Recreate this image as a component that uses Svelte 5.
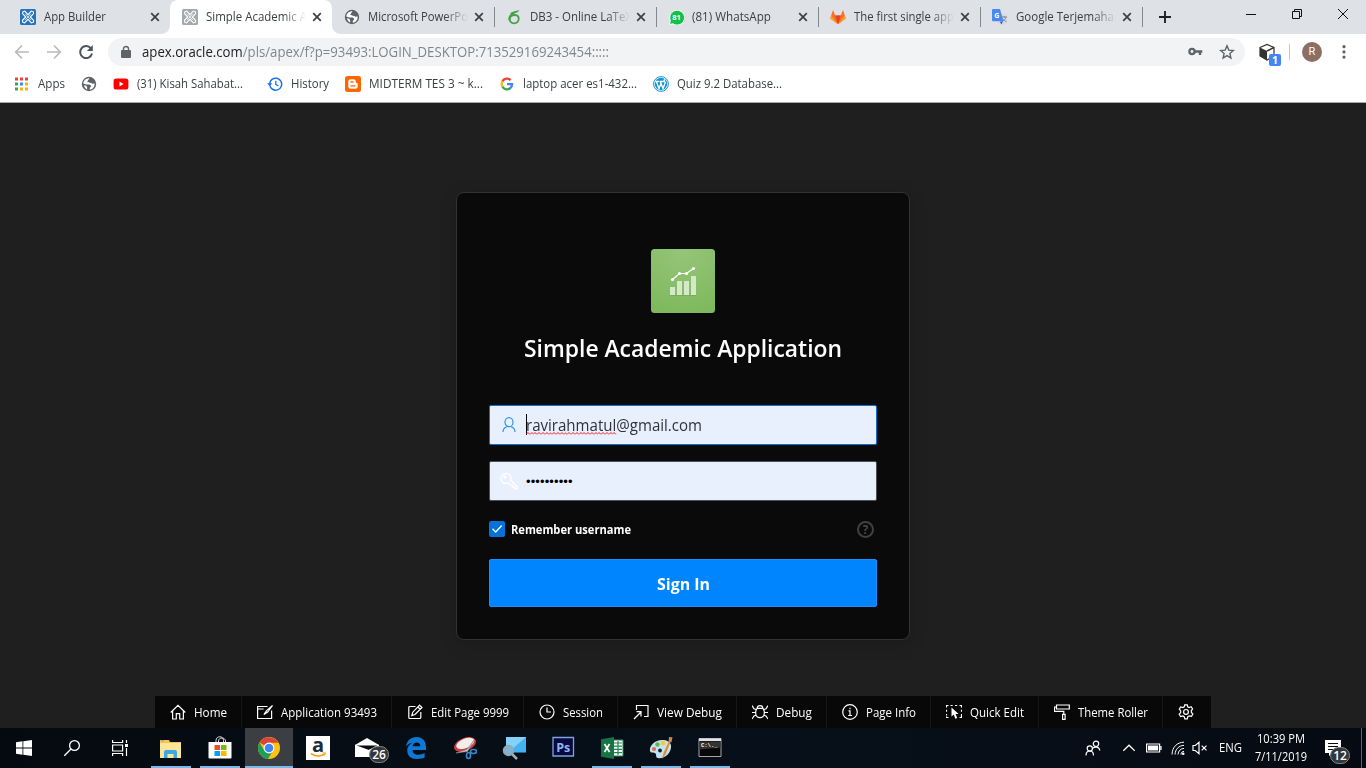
<script>
  // Condenses or widens a label so it fills exactly `width` pixels.
  function fit(node, width) {
    const natural = node.getBoundingClientRect().width;
    if (!natural) return;
    node.style.transform = `scaleX(${width / natural})`;
    node.style.marginRight = width - natural + 'px';
  }

  const apex = (c) => `<rect width="16" height="16" rx="1.5" fill="${c}"/><g fill="none" stroke="#fff" stroke-width="1.1"><path d="M3 2.7l1.8-.6 3.2 3.5 3.2-3.5 2.2.7.1 1.8L10.3 8l3.3 3.4-.2 1.8-2 .7L8 10.4l-3.4 3.4-1.9-.6-.2-1.9L5.8 8 2.5 4.6z"/><path d="M5.200 4.800l5.800 6.300M10.800 4.800l-5.700 6.400" stroke-width=".8"/></g>`;
  const globe = `<circle cx="8" cy="8" r="7.2" fill="#5f6368"/><path d="M8.4 2.2L6.8 5l1 1.2 2.2.2 1.2 1.4 2.4-.2c.4 3.2-1.9 5.9-4.800 6.200V12l1.600-2-1.800-1.600H5.200L2.300 7.500C2.500 4.400 5 2.200 8.400 2.200z" fill="#fff"/><path d="M3 9.300l2.300.4.8 1.500v2.200C4.400 12.800 3.200 11 3 9.300z" fill="#fff"/><path d="M6 5.400L9 3l3.500 2.300L10 7z" fill="#5f6368"/>`;

  const tabs = [
    { title: 'App Builder', w: 62, icon: apex('#2574bb') },
    { title: 'Simple Academic A', w: 101, icon: apex('#a4a9ad'), active: true, fade: true },
    { title: 'Microsoft PowerPo', w: 100, icon: globe, fade: true },
    { title: 'DB3 - Online LaTeX', w: 102, fade: true, sep: true, icon: `<path d="M3 11.200c0-3.500 2.200-6 5.400-6.500M9.200 6c2.300 0 3.700 1.700 3.500 4-.2 2.500-2.200 4.300-4.700 4.300-2.600 0-4.300-1.700-4.200-4.300.2-2.400 2.400-4.100 5.400-4z" fill="none" stroke="#46a247" stroke-width="1.800"/><path d="M4 4.600C6 2.500 9 2 13.500 1.200 12 3.600 9 4 6.200 5.400z" fill="#46a247"/>` },
    { title: '(81) WhatsApp', w: 79, sep: true, icon: `<path d="M1.500 15.500l.8-4A7.400 7.400 0 1 1 5 14.800z" fill="#12c146" stroke="#fff" stroke-width="1"/><text x="8.500" y="10.700" text-anchor="middle" font-family="Open Sans, sans-serif" font-weight="700" font-size="7.500" fill="#fff">81</text>` },
    { title: 'The first single app', w: 100, fade: true, sep: true, icon: `<path d="M8 15.300L.2 9.500 3 1l2.200 5.400h5.600L13 1l2.800 8.500z" fill="#fc6d26"/><path d="M8 15.300L5.200 6.400h5.600z" fill="#e24329"/><path d="M8 15.300L.2 9.500l1-3zM8 15.300l7.800-5.800-1-3z" fill="#fca326"/>` },
    { title: 'Google Terjemahan', w: 105, fade: true, sep: true, icon: `<rect x="6" y="5" width="9.500" height="10.500" rx="1" fill="#d8dbe0"/><path d="M9.500 8h5.500M12.200 7v1.200M14 8.200c-.5 2-2 3.300-3.500 4M10.700 9.500c.7 1.300 2 2.400 3.800 3.200" fill="none" stroke="#73829a" stroke-width=".9"/><path d="M8 12.500h3l-1.700 3z" fill="#2752c4"/><path d="M1.200 0H8l3.400 12.300H1.200A1.200 1.200 0 0 1 0 11.100V1.200A1.200 1.200 0 0 1 1.200 0z" fill="#4a88f2"/><text x="4.800" y="8.800" text-anchor="middle" font-family="Open Sans, sans-serif" font-weight="700" font-size="7" fill="#fff">G</text>` }
  ];

  const bookmarks = [
    { label: 'Apps', w: 27, x: 14, gap: 8, icon: `<g fill="#ea4335"><path d="M1 1.500h3v3H1zM6 1.500h3v3H6z"/><path d="M11 1.500h3v3h-3z"/></g><path d="M1 6.500h3v3H1z" fill="#34a853"/><path d="M6 6.500h3v3H6z" fill="#4285f4"/><path d="M11 6.500h3v3h-3zM6 11.500h3v3H6zM11 11.500h3v3h-3z" fill="#fbaf04"/><path d="M1 11.500h3v3H1z" fill="#34a853"/>` },
    { label: '', w: 0, x: 16, gap: 0, icon: globe },
    { label: '(31) Kisah Sahabat...', w: 106, x: 16, gap: 8, icon: `<rect x=".6" y="2.500" width="14.800" height="11" rx="2.600" fill="#f00"/><path d="M6.500 5.600v4.800L10.600 8z" fill="#fff"/>` },
    { label: 'History', w: 38, x: 24, gap: 8, icon: `<path d="M2.700 9A6 6 0 1 0 5 3.400 6 6 0 0 0 2.700 8" fill="none" stroke="#1a73e8" stroke-width="1.500"/><path d="M0 7.200h5.400L2.700 10z" fill="#1a73e8"/><path d="M8.800 4.800v3.600l2.600 1.600" fill="none" stroke="#1a73e8" stroke-width="1.300"/>` },
    { label: 'MIDTERM TES 3 ~ k...', w: 114, x: 16, gap: 8, icon: `<rect width="16" height="16" rx="2.500" fill="#f60"/><path d="M3.300 5.800a2.500 2.500 0 0 1 2.500-2.500h2.500a2.500 2.500 0 0 1 2.500 2.500c0 .8.300 1.200 1 1.200.6 0 .9.300.9.900v2.300a2.500 2.500 0 0 1-2.500 2.500H5.800a2.500 2.500 0 0 1-2.500-2.500z" fill="#fff"/><path d="M6 6h2M6 9.900h4" stroke="#f60" stroke-width="1.300" stroke-linecap="round"/>` },
    { label: 'laptop acer es1-432...', w: 114, x: 16, gap: 8, icon: `<g fill="none" stroke-width="2.300"><path d="M3.400 5.400A5.100 5.100 0 0 1 11.600 4.200" stroke="#ea4335"/><path d="M3.400 10.600a5.100 5.100 0 0 1 0-5.200" stroke="#fbbc05"/><path d="M11.500 11.900a5.100 5.100 0 0 1-8.100-1.300" stroke="#34a853"/><path d="M8 8.200h5.100a5.100 5.100 0 0 1-1.700 3.800" stroke="#4285f4"/></g>` },
    { label: 'Quiz 9.2 Database...', w: 105, x: 16, gap: 8, icon: `<circle cx="8" cy="8" r="7.400" fill="#fff" stroke="#1696d2" stroke-width="1"/><circle cx="8" cy="8" r="6.200" fill="#1696d2"/><path d="M2.200 5.500h3.600M6.500 5.500h4M3.500 5.700L6 12.600l2-5.300-.6-1.700M8 7.300l2 5.300 2.300-6.100c-1.700-1-1.500-2.700-.2-2.900" stroke="#fff" stroke-width="1.300" fill="none"/>` }
  ];

  const tools = [
    { label: 'Home', w: 33, icon: `<path d="M.7 8.500L8 1.300l7.300 7.200M2.600 7v8h3.700V9.600h3.400V15h3.700V7"/>` },
    { label: 'Application 93493', w: 96, icon: `<path d="M10.500 2.500H.6v12h14v-8M15.500 1.500L9.600 6.600l-2.700 4 3.800-2.500zM.6 5h6"/>` },
    { label: 'Edit Page 9999', w: 78, icon: `<path d="M8.500 2.500H2.800a1 1 0 0 0-1 1v10a1 1 0 0 0 1 1h10a1 1 0 0 0 1-1V8M12.600 1.200l2.400 2.300-7 7-3.200 1 1-3.300zM10.900 3l2.300 2.300"/>` },
    { label: 'Session', w: 40, icon: `<circle cx="8" cy="8" r="7"/><path d="M8 3.500V8h4"/>` },
    { label: 'View Debug', w: 65, icon: `<path d="M3.500 6V1.500H15v11h-4M1 15l7-7M3.500 7.700H8v4.800"/>` },
    { label: 'Debug', w: 36, icon: `<path d="M5 4.300h6l1.300 3v2.300c0 2.300-1.900 4-4.300 4s-4.300-1.700-4.300-4V7.300zM5.200 4.300C5.200 2.500 6.300 1.700 8 1.700s2.800.8 2.800 2.600M0 1.500l2 3.300 2 .7M16 1.500l-2 3.300-2 .7M0 8.500h3.700M12.300 8.500H16M0 15l2-3 2-.8M16 15l-2-3-2-.8"/>` },
    { label: 'Page Info', w: 50, icon: `<circle cx="8" cy="8" r="7.300"/><path d="M6.500 6.800H8v4.600M6.200 11.500h3.800M8 3.700v1.500"/>` },
    { label: 'Quick Edit', w: 54, icon: `<path d="M.5 3.500v-2h2M4.500 1.500h2.200M9 1.500h2.200M13.500 1.500h2v2M.5 5.700v2M.5 10v1.500M.5 12.500v1h2M15.500 5.700v2M15.500 10v3.500h-2"/><path d="M5.500 3.500v9l2.200-2 1.600 4.200 1.900-.8-1.600-3.900h3z" fill="#fff" stroke="none"/>` },
    { label: 'Theme Roller', w: 70, icon: `<path d="M2.500 1h12.800v4H2.500zM2.500 3H.5v4.300h9.300v3M8.600 10.300h2.500v5H8.600z"/>` },
    { label: '', w: 0, icon: `<path d="M6.700.8h2.600l.4 2.100 1.400.7 2-.9 1.500 2.200-1.300 1.800.1 1.700 1.500 1.700-1.400 2.300-2.100-.6-1.600.9-.5 2.100H6.800l-.6-2.100-1.500-.8-2.100.6-1.400-2.300 1.500-1.600V6.900L1.300 5.200l1.300-2.300 2.200.7 1.400-.8z"/><circle cx="8" cy="7.900" r="2.400"/>` }
  ];

  const apps = [
    { name: 'explorer', run: true, icon: `<path d="M1 4h9l1 2h11v16H1z" fill="#f5c64f"/><path d="M1 7h21v15H1z" fill="#fde69a"/><path d="M2 4.700h3" stroke="#4cb8e8"/><path d="M5 22v-6a2 2 0 0 1 2-2h9a2 2 0 0 1 2 2v6h-3.500v-4h-6v4z" fill="#3ca9e2"/>` },
    { name: 'store', run: true, icon: `<path d="M8 7V4.500C8 -.5 15.500 -.5 15.500 4.500V7M10.500 7V5c0-4 7-4 7 0v2" fill="none" stroke="#ddd"/><path d="M.5 6h23v15.500a1 1 0 0 1-1 1h-21a1 1 0 0 1-1-1z" fill="#fff"/><path d="M6.500 9H12v5H6.500z" fill="#f25022"/><path d="M13 9h5.500v5H13z" fill="#7fba00"/><path d="M6.500 15H12v5H6.500z" fill="#00a4ef"/><path d="M13 15h5.500v5H13z" fill="#ffb900"/>` },
    { name: 'chrome', run: true, active: true, icon: `<circle cx="12" cy="12" r="11" fill="#fbc116"/><path d="M12 12L2.500 6.500A11 11 0 0 1 21.500 6.800H12z" fill="#db4437"/><path d="M2.500 6.500A11 11 0 0 0 11 23l5-8.500-4 2.500-5-3z" fill="#1e9e58"/><circle cx="12" cy="12" r="5.400" fill="#fff"/><circle cx="12" cy="12" r="4.300" fill="#4285f4"/>` },
    { name: 'amazon', icon: `<path d="M0 0h24v24H0z" fill="#fff"/><text x="12" y="16" text-anchor="middle" font-family="Open Sans, sans-serif" font-size="20" font-weight="700" fill="#202b3a">a</text><path d="M5 17.700c4.500 3 9.500 2.900 13.500.5" fill="none" stroke="#f90" stroke-width="1.500"/><path d="M16.500 17l2.900-.2-.8 2.700" fill="none" stroke="#f90"/>` },
    { name: 'mail', badge: '26', icon: `<path d="M0 9L12 2l12 7v12H0z" fill="#fff"/><path d="M1.500 9.500h21L14 14z" fill="#070d14"/><path d="M0 9l11 7 13-7" fill="none" stroke="#fff" stroke-width="1"/>` },
    { name: 'edge', icon: `<path d="M2 10.500C3 4.500 7 1 12.500 1 18.500 1 22 5.300 22 11v3H8.500c.2 3.300 2.500 4.700 5.700 4.700 2.500 0 4.500-.6 6.400-1.700v4.600C18.600 22.600 16 23 13 23 7 23 3.200 19.700 3.200 14.500c0-3.500 1.900-6.200 5-7.800C5.500 7 3.400 8.500 2 10.500zM8.600 10.300h7.800c-.1-2.600-1.400-3.900-3.700-3.900-2.200 0-3.700 1.500-4.100 3.900z" fill="#0f78d4"/>` },
    { name: 'snip', icon: `<ellipse cx="12" cy="8.500" rx="11.500" ry="6.500" transform="rotate(-22 12 8.500)" fill="#d83a3c"/><ellipse cx="12.500" cy="7.500" rx="9.500" ry="4.800" transform="rotate(-22 12 8)" fill="#f3eeee"/><path d="M3 17l11-3.500L21 4l-6.500 11.500z" fill="#c9cdd2" stroke="#808991" stroke-width=".6"/><g fill="none" stroke="#3b85c4" stroke-width="1.700"><ellipse cx="15.500" cy="19.500" rx="2" ry="3"/><ellipse cx="20.500" cy="15.500" rx="3" ry="2"/></g>` },
    { name: 'magnifier', icon: `<path d="M4 1h20v15H4z" fill="#43b2f2"/><path d="M4 1h20L8 15l-4-3z" fill="#84d1fa"/><path d="M4 16h20v1H4z" fill="#29648c"/><path d="M10 18l5 5" stroke="#a6afb7" stroke-width="2.500"/><circle cx="6.500" cy="14.500" r="5" fill="#82b4d1" stroke="#95a7b2" stroke-width="1.500"/>` },
    { name: 'photoshop', icon: `<path d="M2 1.500h20.500v18.500H2z" fill="#09093f" stroke="#7fa3dc" stroke-width="1.300"/><text x="12.200" y="15.700" text-anchor="middle" font-family="Open Sans, sans-serif" font-size="12.500" font-weight="700" fill="#91b6ef">Ps</text>` },
    { name: 'excel', run: true, icon: `<path d="M13 4h10v16H13z" fill="#fff" stroke="#208552"/><path d="M14 7h8M14 10.200h8M14 13.400h8M14 16.600h8M18 5v14" stroke="#208552" stroke-width="1.200"/><path d="M1 3.300L14 1v22L1 20.700z" fill="#177443"/><path d="M4.500 8l5 8M9.500 8l-5 8" stroke="#fff" stroke-width="1.700"/>` },
    { name: 'paint', run: true, icon: `<path d="M1 15c-1-6 6-12 14-11 7 1 8.500 6 6 11-2 5-8 8-12 7-3-.6-1-3-2.500-4.500S1.500 17.600 1 15z" fill="#c3e3f3"/><circle cx="5" cy="13" r="2.100" fill="#e36c4b"/><circle cx="8.500" cy="8.500" r="2.200" fill="#63b450"/><circle cx="14" cy="7.200" r="2.400" fill="#f6c834"/><circle cx="11" cy="14.500" r="1.900" fill="#12202c"/><path d="M13 23l1.500-6L20 5l1.500 1-5 12.500z" fill="#e38b2c"/><path d="M19.500 6l.5-5 3.500.3-1 5z" fill="#bd8b5d"/>` },
    { name: 'terminal', run: true, icon: `<path d="M1 2.500h22v18H1z" fill="#070707" stroke="#a4a6aa" stroke-width="1"/><path d="M1 2.500h22V5H1z" fill="#e1e2e4"/><path d="M1.500 5.500h21v6l-21 2z" fill="#333"/><text x="3" y="11" font-family="Liberation Mono, monospace" font-size="5.500" font-weight="700" fill="#fff">C:\\._</text>` }
  ];
</script>

{#snippet glyph(body, size = 16)}
  <svg width={size} height={size} viewBox="0 0 {size} {size}" aria-hidden="true">{@html body}</svg>
{/snippet}

<div class="screen">
  <header class="tabstrip">
    {#each tabs as t}
      <div class="tab" class:active={t.active} class:sep={t.sep}>
        {@render glyph(t.icon)}
        <span class="title" class:fade={t.fade}><span class="fit" use:fit={t.w}>{t.title}</span></span>
        <svg class="close" width="10" height="10" viewBox="0 0 10 10"><path d="M1.200 1.200l7.600 7.600M8.800 1.200L1.200 8.800" stroke="#3c4043" stroke-width="1.700" /></svg>
      </div>
    {/each}
    <svg class="plus" width="14" height="14" viewBox="0 0 14 14"><path d="M7 1v12M1 7h12" stroke="#202124" stroke-width="1.900" /></svg>
    <div class="window">
      <svg width="12" height="12" viewBox="0 0 12 12"><path d="M1 6.500h10" /></svg>
      <svg width="12" height="12" viewBox="0 0 12 12"><path d="M1.500 3.500h7v7h-7zM3.500 3.500v-2h7v7h-2" /></svg>
      <svg width="12" height="12" viewBox="0 0 12 12"><path d="M1 1l10 10M11 1L1 11" /></svg>
    </div>
  </header>

  <nav class="toolbar">
    <div class="navs">
      <svg width="16" height="16" viewBox="0 0 16 16"><path d="M15 8H2M8 1.500L1.700 8 8 14.500" stroke="#b9bbbe" stroke-width="1.700" fill="none" /></svg>
      <svg width="16" height="16" viewBox="0 0 16 16"><path d="M1 8h13M8 1.500L14.300 8 8 14.500" stroke="#b9bbbe" stroke-width="1.700" fill="none" /></svg>
      <svg width="16" height="16" viewBox="0 0 16 16"><path d="M13.200 4.800A6 6 0 1 0 14 9.500" stroke="#505458" stroke-width="2" fill="none" /><path d="M14.800 1v6H8.800z" fill="#505458" /></svg>
    </div>
    <div class="omnibox">
      <svg width="10" height="14" viewBox="0 0 10 14"><path d="M1 5h8a1 1 0 0 1 1 1v6a1 1 0 0 1-1 1H1a1 1 0 0 1-1-1V6a1 1 0 0 1 1-1z" fill="#5f6368" /><path d="M2.500 6V3.700C2.500.7 7.500.7 7.500 3.700V6" fill="none" stroke="#5f6368" stroke-width="1.400" /></svg>
      <span class="url fit" use:fit={467}><b>apex.oracle.com</b>/pls/apex/f?p=93493:LOGIN_DESKTOP:713529169243454:::::</span>
      <svg class="key" width="16" height="10" viewBox="0 0 16 10"><circle cx="5" cy="4.500" r="2.600" fill="none" stroke="#5f6368" stroke-width="2.300" /><path d="M8 4.500h7.300M13 4.500V8" stroke="#5f6368" stroke-width="2.400" /></svg>
      <svg class="star" width="16" height="16" viewBox="0 0 16 16"><path d="M8 1.800l1.800 4.300 4.600.4-3.500 3 1 4.500L8 11.600 4.100 14l1-4.500-3.500-3 4.600-.4z" fill="none" stroke="#5f6368" stroke-width="1.400" /></svg>
    </div>
    <div class="extension">
      <svg width="18" height="18" viewBox="0 0 18 18"><path d="M2 4.500l7-3 7 3v8.500l-7 4-7-4z" fill="#fff" stroke="#303236" stroke-width="1.200" /><path d="M2 4.500l7 3.500v9l-7-4z" fill="#303236" /><path d="M9 8l7-3.500" stroke="#303236" stroke-width="1.500" /></svg>
      <span class="count">1</span>
    </div>
    <i class="rule"></i>
    <span class="avatar">R</span>
    <svg class="dots" width="4" height="16" viewBox="0 0 4 16" fill="#5f6368"><circle cx="2" cy="2.700" r="1.600" /><circle cx="2" cy="7.900" r="1.600" /><circle cx="2" cy="13.100" r="1.600" /></svg>
  </nav>

  <nav class="bookmarks">
    {#each bookmarks as b}
      <a class="bookmark" style:margin-left="{b.x}px" style:gap="{b.gap}px">
        {@render glyph(b.icon)}
        <span class="slot" style:width="{b.w}px"><span class="fit" use:fit={b.w}>{b.label}</span></span>
      </a>
    {/each}
  </nav>

  <main>
    <form class="card">
      <svg class="logo" width="64" height="64" viewBox="0 0 64 64">
        <defs><radialGradient id="green" cx=".5" cy="0" r="1"><stop offset="0" stop-color="#96c57a" /><stop offset="1" stop-color="#7fb95d" /></radialGradient></defs>
        <rect width="64" height="64" rx="3.500" fill="url(#green)" />
        <path d="M19 38h5v8h-5zM26 32h5v14h-5zM33 32h5v14h-5zM40 27h5v19h-5z" fill="#d5e8c9" />
        <path d="M19 46.500h26" stroke="#6fa552" stroke-width=".6" />
        <path d="M21.500 30.500l7-6h7l7-5" fill="none" stroke="#fff" stroke-width="1.200" />
        <g fill="#fff"><circle cx="21.500" cy="30.500" r="1.600" /><circle cx="28.500" cy="24.500" r="1.600" /><circle cx="35.500" cy="24.500" r="1.600" /><circle cx="42.500" cy="19.500" r="1.600" /></g>
      </svg>
      <h1><span class="fit" use:fit={318}>Simple Academic Application</span></h1>
      <div class="field focus">
        <svg width="18" height="18" viewBox="0 0 18 18" fill="none" stroke="#2f94ef" stroke-width="1.200"><ellipse cx="9" cy="6.200" rx="4" ry="4.500" /><path d="M3 16c0-3 1.700-4.500 4-5.200M15 16c0-3-1.700-4.500-4-5.200" /></svg>
        <i class="caret"></i>
        <span class="email fit" use:fit={176}><span class="misspelt">ravirahmatul</span>@gmail.com</span>
      </div>
      <div class="field">
        <svg width="18" height="18" viewBox="0 0 18 18" fill="none" stroke="#fff" stroke-width="1.300"><path d="M10.700 8.200l6.300 6.300v2.200h-2.600v-1.600h-1.600v-1.700h-1.700l-2.600-2.600A5 5 0 1 1 10.700 8.200z" /><circle cx="4.800" cy="5" r="1" /></svg>
        <span class="password">••••••••••</span>
      </div>
      <div class="remember">
        <span class="check"><svg width="16" height="16" viewBox="0 0 16 16"><path d="M3.500 7.800l3.200 3.200 6-6.500" fill="none" stroke="#fff" stroke-width="1.300" /></svg></span>
        <label><span class="fit" use:fit={120}>Remember username</span></label>
        <span class="help">?</span>
      </div>
      <button type="button"><span class="fit" use:fit={53}>Sign In</span></button>
    </form>
    <nav class="devbar">
      {#each tools as t}
        <a class="tool"><svg width="16" height="16" viewBox="0 0 16 16" fill="none" stroke="#fff" stroke-width="1.200">{@html t.icon}</svg>{#if t.label}<span class="slot" style:width="{t.w}px"><span class="fit" use:fit={t.w}>{t.label}</span></span>{/if}</a>
      {/each}
    </nav>
  </main>

  <footer class="taskbar">
    <div class="sys"><svg width="16" height="16" viewBox="0 0 16 16" fill="#fff"><path d="M0 2.200L6.500 1.300v6.300H0zM7.300 1.200L16 0v7.600H7.300zM0 8.400h6.500v6.300L0 13.800zM7.300 8.400H16V16l-8.700-1.200z" /></svg></div>
    <div class="sys"><svg width="18" height="18" viewBox="0 0 18 18" fill="none" stroke="#fff" stroke-width="1.300"><circle cx="11.500" cy="6.500" r="4.900" /><path d="M8 10L1.300 16.700" /></svg></div>
    <div class="sys"><svg width="16" height="16" viewBox="0 0 16 16" fill="none" stroke="#fff" stroke-width="1.200"><path d="M.6 0v2.500h10V0M.6 5h10v6H.6zM.6 16v-2.500h10V16M14.500 0v3M14.500 8v8" /><path d="M13 4h3v3h-3z" fill="#fff" stroke="none" /></svg></div>
    <div class="apps">
      {#each apps as a}
        <div class="app" class:run={a.run} class:active={a.active}>
          {@render glyph(a.icon, 24)}
          {#if a.badge}<span class="badge">{a.badge}</span>{/if}
        </div>
      {/each}
    </div>
    <div class="tray">
      <svg width="16" height="16" viewBox="0 0 16 16"><circle cx="11" cy="3.800" r="2.700" /><path d="M7.500 8.500c1-1.500 6.500-3 7.300 2M1 15.500c0-6 7.500-6 7.500 0" /><circle cx="4.800" cy="8.500" r="2.600" /></svg>
      <svg class="chev" width="14" height="14" viewBox="0 0 14 14"><path d="M1.300 9.800L7 4.200l5.700 5.600" /></svg>
      <svg class="batt" width="16" height="10" viewBox="0 0 16 10"><path d="M.6 1h13v8H.6zM15 3v4" /><path d="M2 2.500h10.200v5H2z" fill="#fff" stroke="none" /></svg>
      <svg class="wifi" width="14" height="14" viewBox="0 0 14 14"><path d="M1 13.500C1.300 6 6 1.300 13 1.200M4 13.500c.3-5.200 3.800-9 9-9.100M7 13.500c.3-3.500 2.500-6 6-6.100M10 13.500c.2-2 1-3 3-3.100" stroke-width="1" /><circle cx="12.200" cy="12.700" r="1.300" fill="#fff" stroke="none" /></svg>
      <svg class="vol" width="16" height="14" viewBox="0 0 16 14"><path d="M1 4.500h2.300L7 1.300v11.400L3.300 9.500H1zM9.700 4.600l4.800 4.800M14.500 4.600L9.700 9.400" /></svg>
      <span class="lang"><span class="fit" use:fit={23}>ENG</span></span>
      <div class="clock"><span class="fit" use:fit={48}>10:39 PM</span><span class="fit" use:fit={52}>7/11/2019</span></div>
      <div class="notes">
        <svg width="16" height="16" viewBox="0 0 16 16"><path d="M0 0h16v13H8l-4 3v-3H0z" fill="#fff" stroke="none" /><path d="M3 3.500h10M3 6.500h10M3 9.500h6" stroke="#070d14" stroke-width="1" /></svg>
        <span class="badge">12</span>
      </div>
      <i class="peek"></i>
    </div>
  </footer>
</div>

<style>
  :global(body) { margin: 0; overflow: hidden; }
  .screen { width: 1366px; height: 768px; display: flex; flex-direction: column; overflow: hidden; background: #1f1f1f; font: 12px/16px "Open Sans", "Noto Sans", sans-serif; color: #3c4043; }
  .screen :global(svg) { flex: none; display: block; }
  .fit { display: inline-block; flex: none; white-space: nowrap; transform-origin: 0 50%; }
  .slot { display: block; white-space: nowrap; }

  .tabstrip { box-sizing: border-box; height: 34px; padding-left: 8px; display: flex; background: #dee1e6; }
  .tab { box-sizing: border-box; position: relative; width: 162px; height: 34px; padding: 0 10px 0 12px; display: flex; align-items: center; }
  .tab .title { width: 93px; margin: 0 5px 0 8px; overflow: hidden; white-space: nowrap; flex: 1; }
  .tab .title.fade { mask-image: linear-gradient(90deg, #000 76%, transparent 99%); }
  .tab.active { background: #fff; border-radius: 8px 8px 0 0; }
  .tab.active::before, .tab.active::after { content: ""; position: absolute; bottom: 0; width: 8px; height: 8px; }
  .tab.active::before { left: -8px; background: radial-gradient(circle at 0 0, transparent 7.500px, #fff 8px); }
  .tab.active::after { right: -8px; background: radial-gradient(circle at 100% 0, transparent 7.500px, #fff 8px); }
  .tab.sep::before { content: ""; position: absolute; left: 0; top: 7px; width: 1px; height: 20px; background: #84878c; }
  .tab:nth-child(7)::after { content: ""; position: absolute; right: -1px; top: 7px; width: 1px; height: 20px; background: #84878c; }
  .plus { margin: 10px 0 0 16px; }
  .window { margin-left: auto; padding: 8px 17px 0 0; display: flex; gap: 34px; }
  .window svg { fill: none; stroke: #111; stroke-width: 1; }

  .toolbar { height: 36px; display: flex; align-items: center; background: #fff; }
  .navs { display: flex; gap: 16px; margin-left: 14px; }
  .omnibox { box-sizing: border-box; width: 1137px; height: 28px; margin-left: 14px; padding: 0 10px 0 13px; border-radius: 14px; display: flex; align-items: center; background: #f1f3f4; }
  .url { margin-left: 11px; font-size: 14px; color: #80868b; }
  .url b { font-weight: 400; color: #202124; }
  .key { margin-left: auto; }
  .star { margin-left: 16px; }
  .extension { position: relative; margin-left: 13px; }
  .count { position: absolute; left: 11px; top: 11px; width: 12px; height: 12px; border-radius: 2px; background: #4285f4; color: #fff; font-size: 10.500px; font-weight: 700; line-height: 12px; text-align: center; }
  .rule { width: 1px; height: 16px; margin-left: 13px; background: #c6c8cb; }
  .avatar { width: 20px; height: 20px; margin-left: 12px; border-radius: 50%; background: #8d6e63; color: #fff; font: 11px/20px Roboto, sans-serif; text-align: center; }
  .dots { margin-left: 20px; }

  .bookmarks { box-sizing: border-box; height: 33px; padding-bottom: 4px; border-bottom: 1px solid #a9a9aa; display: flex; align-items: center; background: #fff; }
  .bookmark { display: flex; align-items: center; }

  main { height: 625px; display: flex; flex-direction: column; align-items: center; }
  .card { box-sizing: border-box; width: 454px; height: 448px; margin: 89px 0 56px; padding: 56px 32px 32px; display: flex; flex-direction: column; border: 1px solid #333; border-radius: 8px; background: #0a0a0a; box-shadow: 0 4px 18px #00000026; }
  .logo { align-self: center; }
  h1 { margin: 19px 0 0; font-size: 24px; font-weight: 600; line-height: 32px; color: #fff; text-align: center; }
  .field { box-sizing: border-box; height: 40px; margin-top: 16px; padding-left: 10px; display: flex; align-items: center; border: 1px solid #4d5157; border-radius: 2px; background: #e8f0fe; color: #303237; }
  .field.focus { margin-top: 41px; border-color: #0572ce; }
  .caret { width: 1px; height: 21px; margin: -2px -1px 0 8px; background: #000; }
  .email { font-size: 16px; line-height: 22px; }
  .misspelt { padding-bottom: 0; background: url("data:image/svg+xml,%3Csvg xmlns='http://www.w3.org/2000/svg' width='4' height='3'%3E%3Cpath d='M0 2.500L2 .5 4 2.500' fill='none' stroke='%23f01818'/%3E%3C/svg%3E") 0 100% repeat-x; background-position-y: calc(100% - 1px); }
  .password { margin: 2px 0 0 8px; font: 13px/16px "Liberation Sans", sans-serif; letter-spacing: .12px; color: #000; }
  .remember { height: 16px; margin-top: 20px; display: flex; align-items: center; }
  .check { width: 16px; height: 16px; border-radius: 2px; background: #0572dc; }
  label { margin: 2px 0 0 6px; font-weight: 700; color: #fff; }
  .help { box-sizing: border-box; width: 17px; height: 17px; margin: 0 3px 0 auto; border: 2px solid #414141; border-radius: 50%; color: #484848; font-weight: 700; font-size: 11.500px; line-height: 13px; text-align: center; }
  button { height: 48px; margin-top: 22px; padding: 1px 0 0; border: 1px solid #1c8fff; border-radius: 2px; background: #0085ff; color: #fff; font: 700 16px/22px "Open Sans", sans-serif; }
  .devbar { height: 32px; display: flex; background: #080808; color: #fff; }
  .tool { display: flex; align-items: center; gap: 8px; padding: 0 14px 0 15px; border-right: 1px solid #171717; }
  .tool .slot { padding-top: 1px; }
  .tool:last-child { padding: 0 17px 0 15px; border: 0; }

  .taskbar { height: 40px; display: flex; background: linear-gradient(90deg, #050a10, #07101a 55%, #060b13); color: #fff; }
  .sys { width: 48px; height: 40px; display: flex; align-items: center; justify-content: center; }
  .apps { margin-left: 3px; display: flex; gap: 1px; }
  .app { position: relative; width: 48px; height: 40px; display: flex; align-items: center; justify-content: center; }
  .app.run::after { content: ""; position: absolute; left: 4px; right: 4px; bottom: 0; height: 2px; background: #76b9ed; }
  .app.active { background: #3b3f43; }
  .app.active::after { left: 0; right: 0; }
  .badge { box-sizing: border-box; position: absolute; width: 20px; height: 17px; border: 1px solid #85888b; border-radius: 9px; background: #33373a; color: #fff; font-size: 12px; font-weight: 600; line-height: 15px; text-align: center; }
  .app .badge { left: 26px; top: 18px; }
  .tray { margin-left: auto; display: flex; align-items: center; }
  .tray svg { fill: none; stroke: #fff; stroke-width: 1.200; }
  .chev { margin-left: 21px; }
  .batt { margin-left: 10px; }
  .wifi { margin-left: 9px; }
  .vol { margin-left: 7px; }
  .lang { width: 23px; margin-left: 11px; white-space: nowrap; }
  .clock { width: 54px; margin-left: 12px; display: flex; flex-direction: column; align-items: center; line-height: 18px; }
  .notes { position: relative; margin-left: 17px; }
  .notes .badge { left: 5px; top: 7px; }
  .peek { width: 1px; height: 40px; margin: 0 4px 0 20px; background: #606468; }
</style>
